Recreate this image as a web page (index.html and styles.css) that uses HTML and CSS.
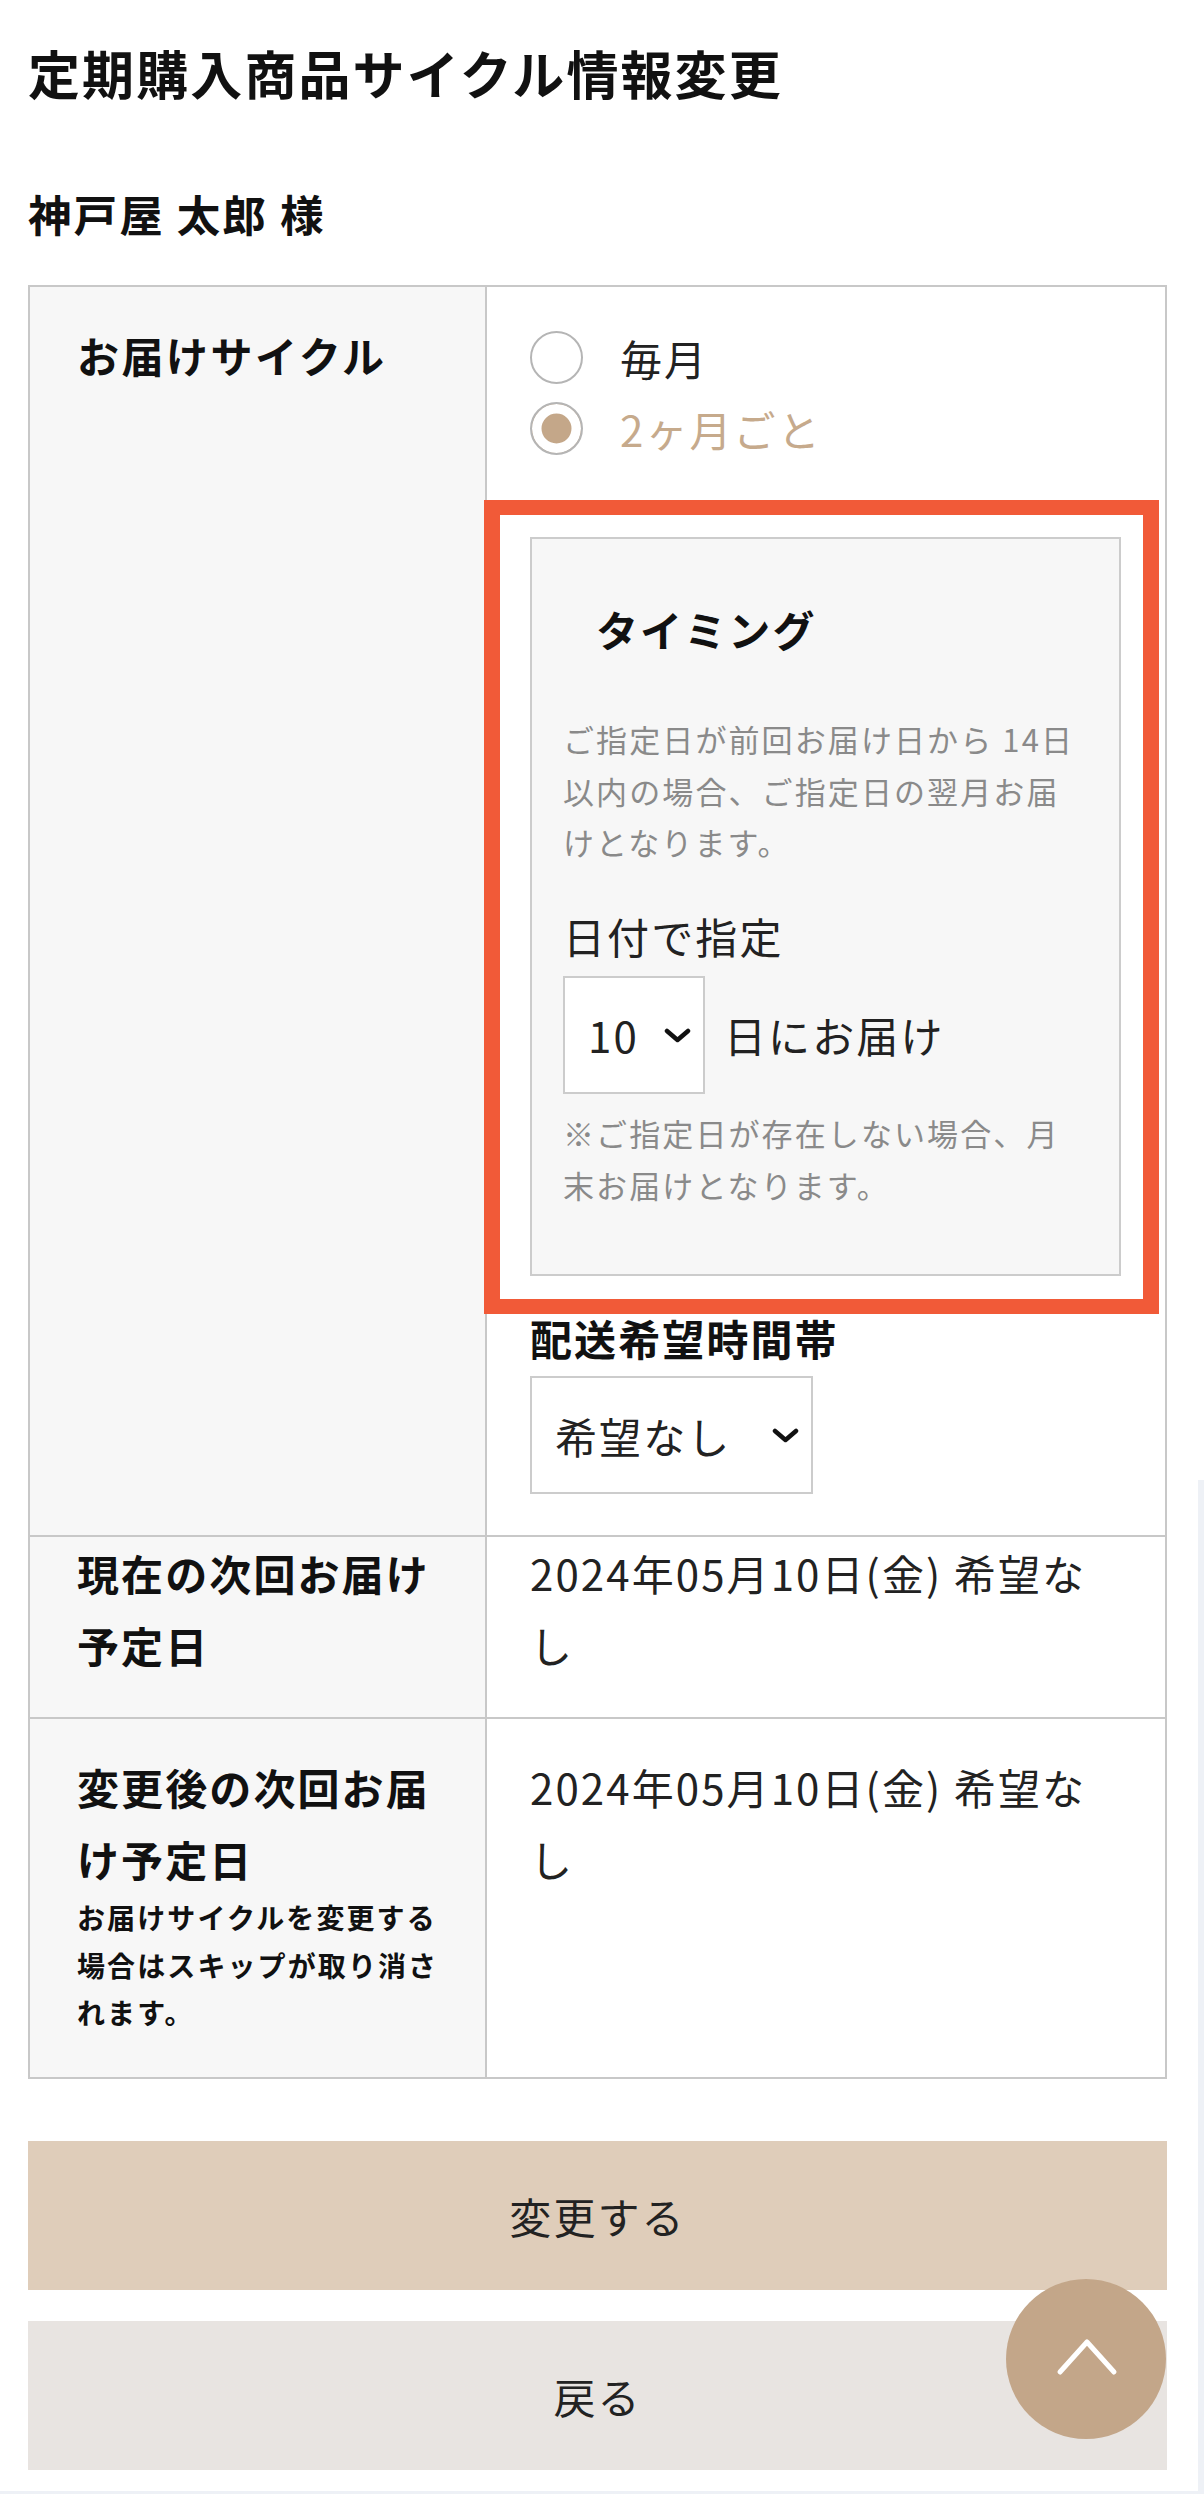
FILE: index.html
```html
<!DOCTYPE html>
<html lang="ja">
<head>
  <meta charset="UTF-8" />
  <meta name="viewport" content="width=device-width, initial-scale=1.0" />
  <title>定期購入商品サイクル情報変更</title>
  <link rel="stylesheet" href="styles.css">
</head>
<body>
  <main class="page">
    <h1 class="page-title">定期購入商品サイクル情報変更</h1>
    <p class="customer-name">神戸屋 太郎 様</p>

    <form class="cycle-form" onsubmit="return false;">
      <table class="cycle-table">
        <colgroup>
          <col class="col-label">
          <col>
        </colgroup>
        <tr class="row-cycle">
          <th>お届けサイクル</th>
          <td>
            <label class="radio">
              <input type="radio" name="cycle" value="1" />
              <span>毎月</span>
            </label>
            <label class="radio">
              <input type="radio" name="cycle" value="2" checked />
              <span>2ヶ月ごと</span>
            </label>

            <div class="timing">
              <h3 class="timing-title">タイミング</h3>
              <p class="note">ご指定日が前回お届け日から 14日以内の場合、ご指定日の翌月お届けとなります。</p>
              <p class="timing-label">日付で指定</p>
              <div class="day-row">
                <div class="select-wrap select-day">
                  <select id="delivery-day">
                    <option value="10">10</option>
                  </select>
                  <svg class="chevron" viewBox="0 0 27 15"><path d="M3 3 L13.5 12 L24 3" /></svg>
                </div>
                <span class="day-suffix">日にお届け</span>
              </div>
              <p class="note note-last">※ご指定日が存在しない場合、月末お届けとなります。</p>
            </div>

            <p class="field-title">配送希望時間帯</p>
            <div class="select-wrap select-time">
              <select id="delivery-time">
                <option value="">希望なし</option>
              </select>
              <svg class="chevron" viewBox="0 0 27 15"><path d="M3 3 L13.5 12 L24 3" /></svg>
            </div>
          </td>
        </tr>
        <tr class="row-current">
          <th>現在の次回お届け予定日</th>
          <td>2024年05月10日(金) 希望なし</td>
        </tr>
        <tr class="row-next">
          <th>
            変更後の次回お届け予定日
            <small class="th-note">お届けサイクルを変更する場合はスキップが取り消されます。</small>
          </th>
          <td>2024年05月10日(金) 希望なし</td>
        </tr>
      </table>

      <div class="actions">
        <button type="submit" class="btn btn-submit">変更する</button>
        <button type="button" class="btn btn-back">戻る</button>
      </div>
    </form>
  </main>
  <div class="page-footer"></div>

  <a class="pagetop" href="#">
    <svg viewBox="0 0 160 160"><path d="M54 93 L81 63 L108 93" /></svg>
  </a>
  <div class="scroll-thumb"></div>
</body>
</html>
```

FILE: styles.css
```css
body {
  margin: 0;
  font-family: "Noto Sans CJK JP", "Noto Sans", sans-serif;
  font-size: 42px;
  line-height: 1.7;
  letter-spacing: 0.05em;
  color: #222;
  background: #fff;
}
.page {
  padding: 0 37px 0 28px;
}
.page-title {
  margin: 34px 0 0;
  font-size: 52px;
  line-height: 1.5;
  font-weight: bold;
  color: #111;
}
.customer-name {
  margin: 65px 0 0;
  font-size: 43.5px;
  font-weight: bold;
  color: #111;
}
.cycle-form {
  margin: 34px 0 0;
}
.cycle-table {
  width: 100%;
  border-collapse: collapse;
  table-layout: fixed;
  border: 2px solid #c8c8c8;
}
.col-label {
  width: 457px;
}
.cycle-table th,
.cycle-table td {
  border: 2px solid #c8c8c8;
  vertical-align: top;
  text-align: left;
}
.cycle-table th {
  background: #f7f7f7;
  font-weight: bold;
  color: #111;
  padding: 32px 40px 36px 47px;
}
.cycle-table td {
  background: #fff;
  padding: 32px 44px 36px 43px;
}
.row-cycle th {
  letter-spacing: 0.06em;
}
.row-cycle td {
  padding-top: 35px;
  padding-bottom: 41px;
}
.row-current th,
.row-current td {
  padding-top: 0;
  padding-bottom: 37px;
}
.row-next th,
.row-next td {
  padding-bottom: 40px;
}
.th-note {
  display: block;
  font-size: 28px;
  line-height: 1.7;
}

.radio {
  display: flex;
  align-items: center;
  height: 71px;
  cursor: pointer;
}
.radio input {
  appearance: none;
  -webkit-appearance: none;
  box-sizing: border-box;
  width: 53px;
  height: 53px;
  margin: 0 37px 0 0;
  border: 2px solid #b5b5b5;
  border-radius: 50%;
  background: #fff;
}
.radio input:checked {
  background: #c4a789;
  box-shadow: inset 0 0 0 9.5px #fff;
}
.radio input:checked + span {
  color: #c6aa8c;
}

.timing {
  position: relative;
  margin-top: 73px;
  padding: 54px 35px 64px 31px;
  background: #f7f7f7;
  border: 2px solid #cccccc;
}
/* highlight frame drawn over the timing block */
.timing::after {
  content: "";
  position: absolute;
  top: -39px;
  left: -48px;
  right: -40px;
  bottom: -40px;
  border-style: solid;
  border-color: #f15a38;
  border-width: 15px 16px;
  pointer-events: none;
}
.timing-title {
  margin: 0;
  padding-left: 33px;
  font-size: 42px;
  font-weight: bold;
  color: #111;
}
.note {
  margin: 49px 0 0;
  font-size: 31px;
  line-height: 1.66;
  color: #8a8a8a;
}
.timing-label {
  margin: 32px 0 0;
}
.day-row {
  display: flex;
  align-items: center;
  margin-top: 5px;
}
.day-suffix {
  margin-left: 19px;
}
.note-last {
  margin-top: 13px;
}
.field-title {
  margin: 26px 0 0;
  font-weight: bold;
  color: #111;
}

.select-wrap {
  position: relative;
  display: inline-block;
  vertical-align: top;
}
.select-wrap select {
  appearance: none;
  -webkit-appearance: none;
  box-sizing: border-box;
  height: 118px;
  margin: 0;
  border: 2px solid #cccccc;
  border-radius: 0;
  background: #fff;
  color: #222;
  font: inherit;
  letter-spacing: inherit;
  padding: 0 60px 0 23px;
}
.select-day select {
  width: 142px;
}
.select-time {
  margin-top: 3px;
}
.select-time select {
  width: 283px;
}
.chevron {
  position: absolute;
  right: 14px;
  top: 50%;
  width: 27px;
  height: 15px;
  margin-top: -7px;
  pointer-events: none;
}
.chevron path {
  fill: none;
  stroke: #111;
  stroke-width: 4.5;
  stroke-linecap: round;
  stroke-linejoin: round;
}

.actions {
  margin-top: 62px;
}
.btn {
  display: block;
  width: 100%;
  height: 149px;
  border: none;
  border-radius: 0;
  font: inherit;
  letter-spacing: inherit;
  color: #222;
  cursor: pointer;
}
.btn-submit {
  background: #dfcdba;
}
.btn-back {
  margin-top: 31px;
  background: #e8e4e1;
}
.page-footer {
  margin-top: 21px;
  height: 40px;
  background: #eef1f6;
}

.pagetop {
  position: fixed;
  right: 38px;
  bottom: 55px;
  width: 160px;
  height: 160px;
  border-radius: 50%;
  background: #c3a689;
}
.pagetop svg {
  display: block;
  width: 160px;
  height: 160px;
}
.pagetop path {
  fill: none;
  stroke: #fff;
  stroke-width: 5;
  stroke-linecap: round;
  stroke-linejoin: round;
}
.scroll-thumb {
  position: fixed;
  top: 1480px;
  right: 0;
  bottom: 0;
  width: 6px;
  background: #eef1f6;
}
```
